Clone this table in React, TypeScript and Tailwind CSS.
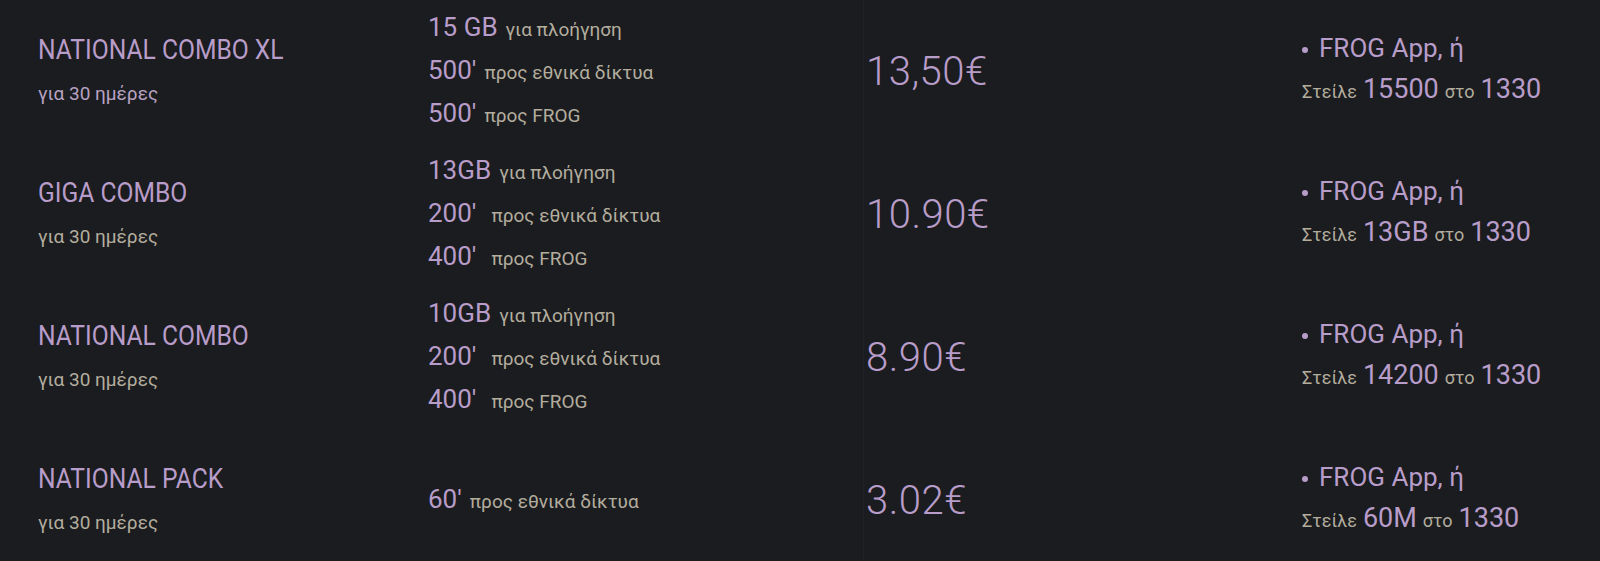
const plans = [
  {
    name: 'NATIONAL COMBO XL',
    subTint: true,
    lines: [
      { big: '15 GB', small: 'για πλοήγηση', wide: false },
      { big: "500'", small: 'προς εθνικά δίκτυα', wide: false },
      { big: "500'", small: 'προς FROG', wide: false },
    ],
    price: '13,50€',
    code: '15500',
  },
  {
    name: 'GIGA COMBO',
    subTint: false,
    lines: [
      { big: '13GB', small: 'για πλοήγηση', wide: false },
      { big: "200'", small: 'προς εθνικά δίκτυα', wide: true },
      { big: "400'", small: 'προς FROG', wide: true },
    ],
    price: '10.90€',
    code: '13GB',
  },
  {
    name: 'NATIONAL COMBO',
    subTint: false,
    lines: [
      { big: '10GB', small: 'για πλοήγηση', wide: false },
      { big: "200'", small: 'προς εθνικά δίκτυα', wide: true },
      { big: "400'", small: 'προς FROG', wide: true },
    ],
    price: '8.90€',
    code: '14200',
  },
  {
    name: 'NATIONAL PACK',
    subTint: false,
    lines: [{ big: "60'", small: 'προς εθνικά δίκτυα', wide: false }],
    price: '3.02€',
    code: '60M',
  },
]

export default function App() {
  return (
    <div className="min-h-[561px] w-[1600px] overflow-hidden bg-[#1b1c1f] font-['Roboto','Liberation_Sans',sans-serif]">
      {plans.map((p) => (
        <div key={p.name} className="grid h-[143px] grid-cols-[428px_435px_437px_1fr] items-stretch">
          <div className="flex flex-col justify-center pl-[38px]">
            {/* condensed headline, the source font is a narrow DIN */}
            <p className="leading-[40px]">
              <span className="inline-block origin-left scale-x-[0.88] whitespace-nowrap text-[28px] text-[#b89cc9]">
                {p.name}
              </span>
            </p>
            <p className={`text-[19px] leading-[39px] ${p.subTint ? 'text-[#b7a2c2]' : 'text-[#b3ad9e]'}`}>
              για 30 ημέρες
            </p>
          </div>

          <div className="flex flex-col justify-center">
            {p.lines.map((l) => (
              <p key={l.big + l.small} className="flex items-baseline leading-[41px]">
                <span className="text-[26px] text-[#b89cc9]">{l.big}</span>
                <span className={`${l.wide ? 'ml-[15px]' : 'ml-[8px]'} text-[19px] text-[#b3ad9e]`}>{l.small}</span>
              </p>
            ))}
          </div>

          <div className="flex items-center border-l border-[#202124] pl-[2px]">
            <span className="text-[40px] font-light tracking-[0.5px] text-[#b89cc9]">{p.price}</span>
          </div>

          <div className="flex flex-col justify-center pb-[4px] pl-[2px]">
            <p className="flex items-center leading-[41px] text-[26px] text-[#b89cc9]">
              <span className="mr-[11px] mt-[3px] size-[6px] rounded-full bg-[#b89cc9]" />
              FROG App, ή
            </p>
            <p className="flex items-baseline leading-[41px]">
              <span className="text-[18px] text-[#b3ad9e]">Στείλε</span>
              <span className="ml-[6px] text-[27px] text-[#b89cc9]">{p.code}</span>
              <span className="ml-[6px] text-[18px] text-[#b3ad9e]">στο</span>
              <span className="ml-[6px] text-[27px] text-[#b89cc9]">1330</span>
            </p>
          </div>
        </div>
      ))}
    </div>
  )
}
